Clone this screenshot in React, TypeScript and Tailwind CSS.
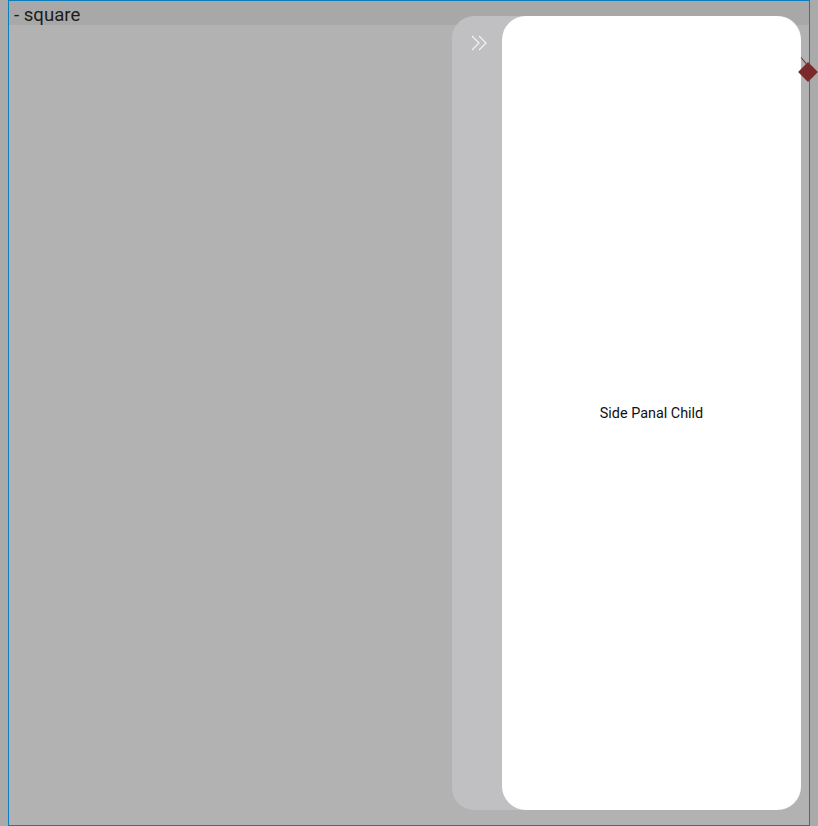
import React from 'react';

function ChevronsRight() {
    return (
        <svg width="20" height="16" viewBox="0 0 20 16" fill="none" className="text-white/80">
            <polyline points="2,1 9,8 2,15" stroke="currentColor" strokeWidth="1.2" />
            <polyline points="9,1 16,8 9,15" stroke="currentColor" strokeWidth="1.2" />
        </svg>
    );
}

export default function App() {
    return (
        <div className="w-[818px] h-[826px] bg-[#aaaaaa] font-['Roboto',sans-serif] overflow-hidden">
            <div className="relative ml-2 w-[802px] h-[826px] border border-[#0b7ec0] bg-[#b2b2b2] flex flex-col">
                <div className="h-6 bg-[#a8a8a8] pl-[5px] text-[18.6px] leading-[29px] text-[#1c1c1c]">- square</div>

                <div className="absolute left-[443px] top-[15px] w-[349px] h-[794px] rounded-[22px] bg-[#c0c0c2] flex">
                    <div className="w-[50px] pt-[19px] pl-[18px]">
                        <ChevronsRight />
                    </div>
                    <div className="flex-1 rounded-[24px] bg-white flex items-center justify-center pt-[2px] text-[14.4px] text-[#111]">
                        Side Panal Child
                    </div>
                </div>

                <div className="absolute left-[792px] top-[56px] w-[8px] h-px bg-[#7b2a2a] rotate-[50deg] origin-left" />
                <div className="absolute left-[792px] top-[64px] w-[14px] h-[14px] rotate-45 bg-[#7b2a2a]" />
            </div>
        </div>
    );
}
